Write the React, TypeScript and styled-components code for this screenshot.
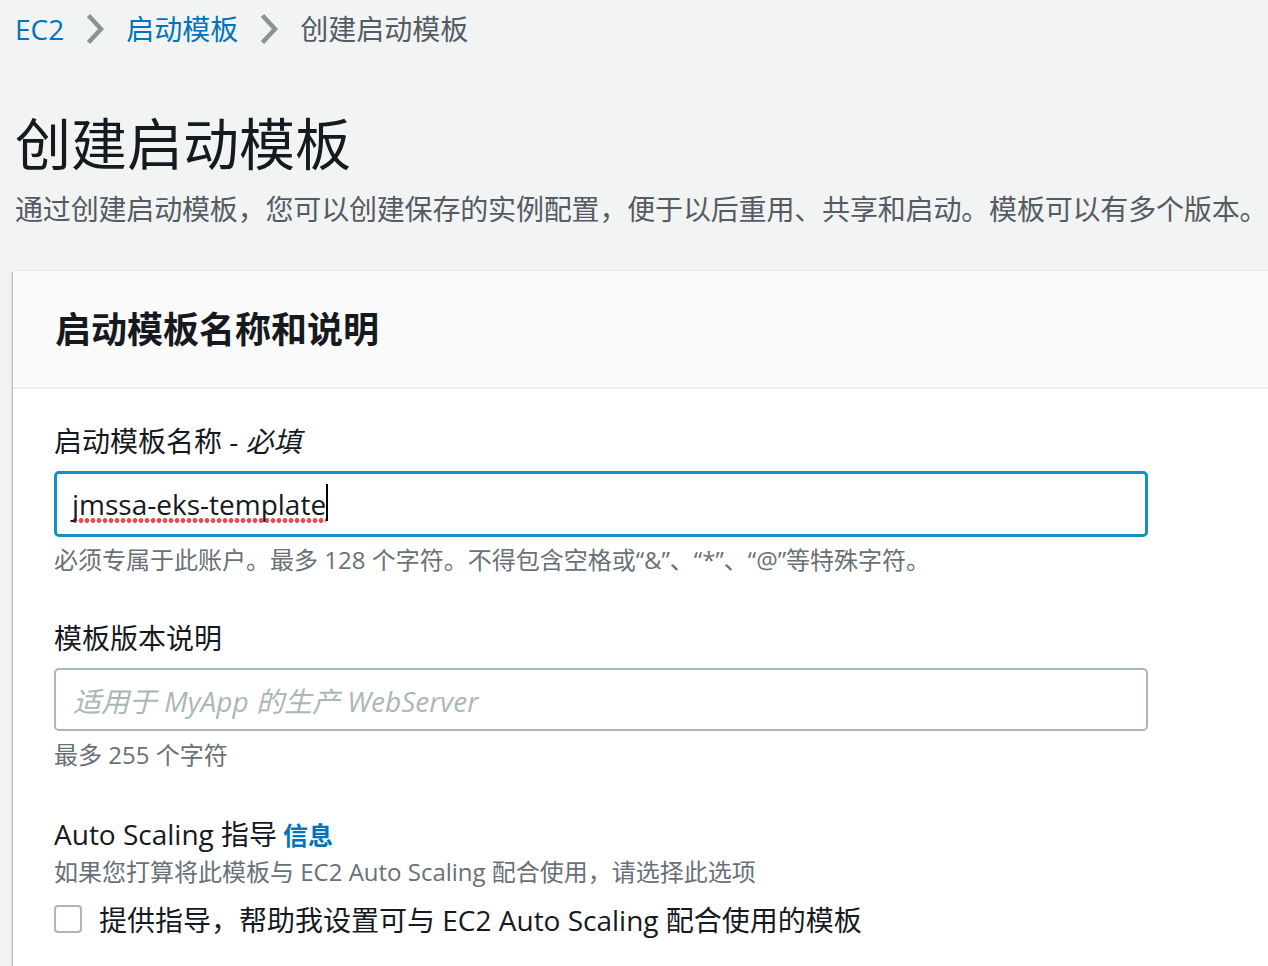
import React from "react";
import styled, { createGlobalStyle } from "styled-components";

const GlobalStyle = createGlobalStyle`
  html, body {
    margin: 0;
    padding: 0;
    background: #f2f3f3;
    overflow: hidden;
  }
  body {
    font-family: "Open Sans", "Noto Sans CJK SC", sans-serif;
    color: #16191f;
  }
`;

const Page = styled.div`
  width: 1268px;
  height: 966px;
  overflow: hidden;
  display: flex;
  flex-direction: column;
`;

const Breadcrumbs = styled.nav`
  display: flex;
  align-items: center;
  height: 40px;
  margin-top: 9px;
  padding-left: 15px;
  font-size: 28px;
`;

const Crumb = styled.span<{ $link?: boolean }>`
  color: ${(p) => (p.$link ? "#0073bb" : "#545b64")};
  line-height: 40px;
  white-space: nowrap;
`;

const Sep = styled.span`
  display: inline-flex;
  align-items: center;
  justify-content: center;
  width: 62px;
`;

const Title = styled.h1`
  margin: 62px 0 0 15px;
  font-size: 56px;
  font-weight: 400;
  line-height: 64px;
  color: #16191f;
  white-space: nowrap;
`;

const Description = styled.p`
  margin: 14px 0 0 15px;
  font-size: 28px;
  letter-spacing: -0.17px;
  line-height: 40px;
  color: #545b64;
  white-space: nowrap;
`;

const Card = styled.section`
  margin: 42px 0 0 13px;
  width: 1320px;
  background: #ffffff;
  box-shadow: 0 1px 2px 0 rgba(0, 28, 36, 0.3), -1px 1px 2px 0 rgba(0, 28, 36, 0.2);
  display: flex;
  flex-direction: column;
`;

const CardHeader = styled.header`
  background: #fafafa;
  border-bottom: 2px solid #eaeded;
  height: 116px;
  display: flex;
  align-items: center;
  padding: 0 42px;
`;

const CardTitle = styled.h2`
  margin: 2px 0 0 0;
  font-size: 36px;
  font-weight: 700;
  line-height: 44px;
  color: #16191f;
`;

const CardBody = styled.div`
  padding: 32px 0 80px 41px;
  display: flex;
  flex-direction: column;
`;

const Field = styled.div<{ $gap?: number }>`
  display: flex;
  flex-direction: column;
  margin-top: ${(p) => p.$gap ?? 0}px;
`;

const Label = styled.label`
  font-size: 28px;
  line-height: 40px;
  color: #16191f;
  white-space: nowrap;
`;

const Em = styled.i`
  font-style: italic;
`;

const InfoLink = styled.a`
  color: #0073bb;
  font-weight: 700;
  font-size: 25px;
  margin-left: 6px;
  text-decoration: none;
`;

const InputBox = styled.div<{ $focused?: boolean }>`
  box-sizing: border-box;
  width: 1094px;
  height: ${(p) => (p.$focused ? 66 : 63)}px;
  margin-top: 10px;
  border: ${(p) => (p.$focused ? "3px solid #1490c2" : "2px solid #aab7b8")};
  border-radius: 5px;
  display: flex;
  align-items: center;
  padding-left: ${(p) => (p.$focused ? 15 : 17)}px;
  font-size: 28px;
  background: #fff;
`;

const Value = styled.span`
  color: #16191f;
  position: relative;
  padding-bottom: 1px;
  background-image: radial-gradient(circle at 50% 50%, #f24b4f 0, #f24b4f 2.1px, transparent 2.7px);
  background-repeat: repeat-x;
  background-position: 0 100%;
  background-size: 6px 7px;
  &::after {
    content: "";
    position: absolute;
    right: -2px;
    top: -1px;
    width: 2px;
    height: 37px;
    background: #000;
  }
`;

const Placeholder = styled.span`
  color: #aab7b8;
  font-style: italic;
`;

const Hint = styled.div<{ $top?: number }>`
  font-size: 24px;
  line-height: 32px;
  color: #687078;
  margin-top: ${(p) => p.$top ?? 7}px;
  white-space: nowrap;
`;

const CheckRow = styled.label`
  display: flex;
  align-items: center;
  gap: 17px;
  margin-top: 11px;
  height: 40px;
  font-size: 28px;
  color: #16191f;
  white-space: nowrap;
`;

const CheckBox = styled.span`
  box-sizing: border-box;
  width: 28px;
  height: 28px;
  border: 2px solid #aab7b8;
  border-radius: 4px;
  background: #fff;
  flex: none;
`;

const Chevron = () => (
  <svg width="18" height="32" viewBox="0 0 18 32" aria-hidden="true">
    <path d="M2.5 2.5 L15 16 L2.5 29.5" fill="none" stroke="#879596" strokeWidth="4.5" />
  </svg>
);

export default function App() {
  return (
    <>
      <GlobalStyle />
      <Page>
        <Breadcrumbs>
          <Crumb $link>EC2</Crumb>
          <Sep>
            <Chevron />
          </Sep>
          <Crumb $link>启动模板</Crumb>
          <Sep>
            <Chevron />
          </Sep>
          <Crumb>创建启动模板</Crumb>
        </Breadcrumbs>
        <Title>创建启动模板</Title>
        <Description>
          通过创建启动模板，您可以创建保存的实例配置，便于以后重用、共享和启动。模板可以有多个版本。
        </Description>
        <Card>
          <CardHeader>
            <CardTitle>启动模板名称和说明</CardTitle>
          </CardHeader>
          <CardBody>
            <Field>
              <Label>
                启动模板名称 - <Em>必填</Em>
              </Label>
              <InputBox $focused>
                <Value>jmssa-eks-template</Value>
              </InputBox>
              <Hint>
                必须专属于此账户。最多 128 个字符。不得包含空格或“&”、“*”、“@”等特殊字符。
              </Hint>
            </Field>
            <Field $gap={42}>
              <Label>模板版本说明</Label>
              <InputBox>
                <Placeholder>适用于 MyApp 的生产 WebServer</Placeholder>
              </InputBox>
              <Hint $top={8}>最多 255 个字符</Hint>
            </Field>
            <Field $gap={43}>
              <Label>
                Auto Scaling 指导
                <InfoLink>信息</InfoLink>
              </Label>
              <Hint $top={1}>如果您打算将此模板与 EC2 Auto Scaling 配合使用，请选择此选项</Hint>
              <CheckRow>
                <CheckBox />
                提供指导，帮助我设置可与 EC2 Auto Scaling 配合使用的模板
              </CheckRow>
            </Field>
          </CardBody>
        </Card>
      </Page>
    </>
  );
}
